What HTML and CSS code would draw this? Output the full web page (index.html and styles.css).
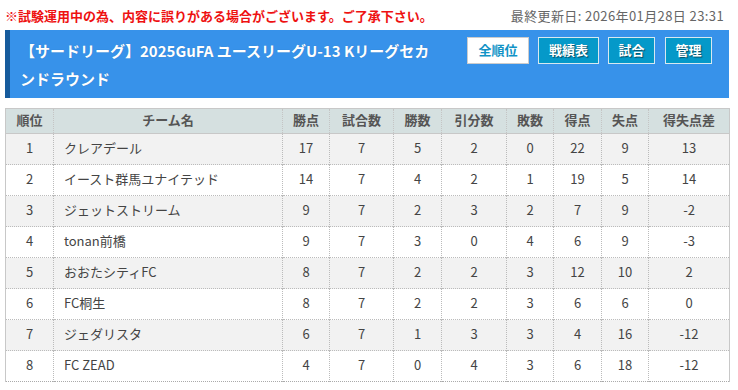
FILE: index.html
```html
<!DOCTYPE html>
<html lang="ja">
<head>
<meta charset="utf-8">
<title>順位表</title>
<link rel="stylesheet" href="styles.css">
</head>
<body>
<div class="page">
  <div class="topline">
    <span class="notice">※試験運用中の為、内容に誤りがある場合がございます。ご了承下さい。</span>
    <span class="updated">最終更新日: 2026年01月28日 23:31</span>
  </div>
  <div class="titlebar">
    <h1 class="title">【サードリーグ】2025GuFA ユースリーグU-13 Kリーグセカンドラウンド</h1>
    <div class="btns">
      <a class="btn active">全順位</a>
      <a class="btn b3">戦績表</a>
      <a class="btn b2">試合</a>
      <a class="btn b2">管理</a>
    </div>
  </div>
  <table class="standings">
    <colgroup>
      <col class="c-rank"><col class="c-team"><col class="c-pts"><col class="c-gp"><col class="c-w"><col class="c-d"><col class="c-l"><col class="c-gf"><col class="c-ga"><col class="c-gd">
    </colgroup>
    <thead>
      <tr><th>順位</th><th>チーム名</th><th>勝点</th><th>試合数</th><th>勝数</th><th>引分数</th><th>敗数</th><th>得点</th><th>失点</th><th>得失点差</th></tr>
    </thead>
    <tbody>
      <tr><td>1</td><td class="team">クレアデール</td><td>17</td><td>7</td><td>5</td><td>2</td><td>0</td><td>22</td><td>9</td><td>13</td></tr>
      <tr><td>2</td><td class="team">イースト群馬ユナイテッド</td><td>14</td><td>7</td><td>4</td><td>2</td><td>1</td><td>19</td><td>5</td><td>14</td></tr>
      <tr><td>3</td><td class="team">ジェットストリーム</td><td>9</td><td>7</td><td>2</td><td>3</td><td>2</td><td>7</td><td>9</td><td>-2</td></tr>
      <tr><td>4</td><td class="team">tonan前橋</td><td>9</td><td>7</td><td>3</td><td>0</td><td>4</td><td>6</td><td>9</td><td>-3</td></tr>
      <tr><td>5</td><td class="team">おおたシティFC</td><td>8</td><td>7</td><td>2</td><td>2</td><td>3</td><td>12</td><td>10</td><td>2</td></tr>
      <tr><td>6</td><td class="team">FC桐生</td><td>8</td><td>7</td><td>2</td><td>2</td><td>3</td><td>6</td><td>6</td><td>0</td></tr>
      <tr><td>7</td><td class="team">ジェダリスタ</td><td>6</td><td>7</td><td>1</td><td>3</td><td>3</td><td>4</td><td>16</td><td>-12</td></tr>
      <tr><td>8</td><td class="team">FC ZEAD</td><td>4</td><td>7</td><td>0</td><td>4</td><td>3</td><td>6</td><td>18</td><td>-12</td></tr>
    </tbody>
  </table>
</div>
</body>
</html>
```

FILE: styles.css
```css
html, body {
  margin: 0;
  padding: 0;
  background: #fff;
}
body {
  font-family: "Noto Sans CJK JP", "Noto Sans", sans-serif;
  color: #444;
}
.page {
  padding: 0 9px 0 5px;
}
.topline {
  display: flex;
  justify-content: space-between;
  align-items: center;
  height: 30px;
  padding-right: 5px;
}
.notice {
  color: #ee1111;
  font-weight: bold;
  font-size: 13px;
}
.updated {
  color: #666;
  font-size: 13px;
  letter-spacing: 0.4px;
}
.titlebar {
  display: flex;
  align-items: flex-start;
  background: #3792ea;
  border-left: 5px solid #165b9c;
  height: 68px;
  box-sizing: border-box;
  padding: 7px 17px 0 10px;
}
.title {
  margin: 0;
  width: 420px;
  color: #fff;
  font-size: 15px;
  font-weight: bold;
  line-height: 28px;
  text-shadow: 0 0 1px rgba(0,0,0,0.2);
  flex: none;
}
.btns {
  display: flex;
  gap: 9px;
  margin-left: auto;
}
.btn {
  display: block;
  box-sizing: border-box;
  width: 47px;
  height: 27px;
  line-height: 24px;
  text-align: center;
  border: 1px solid #d8e8f0;
  background: #0599c9;
  color: #fff;
  font-size: 13px;
  font-weight: bold;
  text-shadow: 1px 1px 1px rgba(0,0,0,0.5);
}
.btn.b3 {
  width: 61px;
}
.btn.b2 + .btn.b2 {
  margin-left: 1px;
}
.btn.active {
  width: 62px;
  background: #fff;
  color: #1193c6;
  text-shadow: none;
  border-color: #ccc;
}
.standings {
  margin-top: 10px;
  width: 724px;
  table-layout: fixed;
  border-collapse: collapse;
  border: 1px solid #c8c8c8;
  border-bottom: 1px dotted #aaa;
  font-size: 13px;
}
.c-rank { width: 48px; }
.c-team { width: 229px; }
.c-pts { width: 47px; }
.c-gp { width: 64px; }
.c-w { width: 48px; }
.c-d { width: 65px; }
.c-l { width: 47px; }
.c-gf { width: 48px; }
.c-ga { width: 47px; }
.c-gd { width: 81px; }
.standings th {
  background: #d5e0e0;
  color: #555;
  font-weight: bold;
  height: 22px;
  padding: 0 0 2px;
  line-height: 18px;
  border-left: 1px dotted #c4c4c4;
  border-bottom: 1px solid #c8c8c8;
}
.standings td {
  height: 28px;
  padding: 0 0 2px;
  line-height: 18px;
  text-align: center;
  color: #444;
  border-left: 1px dotted #bbb;
  border-top: 1px dotted #bbb;
}
.standings td.team {
  text-align: left;
  padding-left: 10px;
}
.standings tbody tr:nth-child(odd) td {
  background: #f2f2f2;
}
```
